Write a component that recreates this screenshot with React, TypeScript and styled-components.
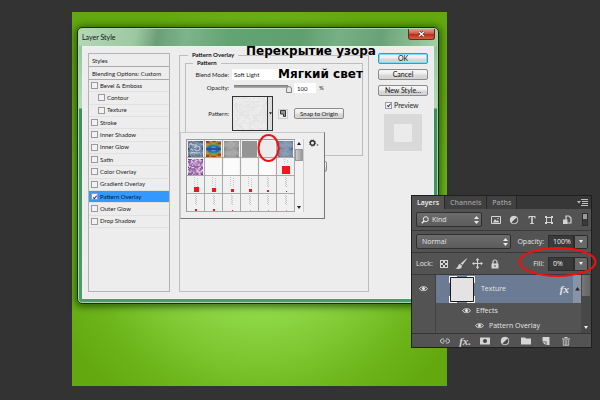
import React from "react";
import styled, { createGlobalStyle, css } from "styled-components";

const GlobalStyle = createGlobalStyle`
  *, *::before, *::after { box-sizing: border-box; }
  body { margin: 0; background: #333; }
  button, input, select { font: inherit; color: inherit; margin: 0; padding: 0; }
  svg { display: block; flex: none; }
`;

/* ---------- desktop ---------- */

const Desktop = styled.main`
  position: relative;
  min-height: 100vh;
  padding: 12px 0 14px 12%;
  display: flex;
  background: #333;
  overflow: hidden;
  font-family: "Lato", "Liberation Sans", sans-serif;
`;

const Artboard = styled.div`
  width: 71%;
  background: radial-gradient(circle at 50% 56%, #9be455 0, #8fd948 90px, #7fc832 135px, #6db51b 180px, #63a80f 225px);
`;

const Annotation = styled.p<{ $x: number; $y: number }>`
  position: absolute;
  left: ${(p) => p.$x}px;
  top: ${(p) => p.$y}px;
  margin: 0;
  color: #000;
  font: bold 12px/16px "DejaVu Sans", "Noto Sans", sans-serif;
  white-space: nowrap;
`;

const Ring = styled.svg<{ $x: number; $y: number }>`
  position: absolute;
  left: ${(p) => p.$x}px;
  top: ${(p) => p.$y}px;
  pointer-events: none;
`;

/* ---------- dialog ---------- */

const Dialog = styled.section`
  position: absolute;
  left: 77px;
  top: 27px;
  width: 362px;
  padding: 0 4px 4px;
  border: 1px solid #16301c;
  border-radius: 5px;
  background: linear-gradient(#8fbf96 0, #b7d8b8 80px, #3f8d58 81px, #4c9d68 100%);
  box-shadow: inset 0 0 0 1px #a9d3b0, 0 1px 7px 2px rgba(10, 40, 0, 0.6);
  color: #222;
  font-size: 6px;
  line-height: 8px;
`;

const TitleBar = styled.header`
  display: flex;
  justify-content: space-between;
  height: 17px;
  margin: 0 -3px;
  padding: 0 2px 0 3px;
  margin-top: 1px;
  border-radius: 3px 3px 0 0;
  background: linear-gradient(100deg, #b5d6b8 0, #9cc8a1 16%, #6c9f78 22%, #7db48a 30%, #62a373 42%, #5f9f70 62%, #77b084 72%, #69a278 84%, #a5d0a8 100%);
`;

const DialogTitle = styled.h1`
  margin: 0;
  font-size: 7px;
  line-height: 16px;
  font-weight: 400;
  color: #111;
`;

const CloseButton = styled.button`
  display: grid;
  place-items: center;
  width: 27px;
  height: 11px;
  border: 1px solid #6a2a20;
  border-top: 0;
  border-radius: 0 0 3px 3px;
  background: linear-gradient(#e0a090 0, #cf5a45 45%, #b52a14 50%, #d9603c 100%);
`;

const DialogBody = styled.div`
  display: grid;
  grid-template-columns: 82px 1fr 50px;
  gap: 9px;
  padding: 4px 5px 6px;
  border: 1px solid #e9f5ea;
  background: #ededed;
`;

const StyleList = styled.div`
  display: flex;
  flex-direction: column;
  margin-top: 2px;
  border: 1px solid #b4b4b4;
`;

const ListHead = styled.div`
  height: 13px;
  padding-left: 3px;
  line-height: 13px;
  border-bottom: 1px solid #a9a9a9;
`;

const EffectRows = styled.div`
  display: grid;
  grid-template-rows: repeat(12, 1fr);
  height: 148px;
`;

const EffectRow = styled.label<{ $nested?: boolean; $active?: boolean }>`
  display: flex;
  align-items: center;
  gap: 2px;
  padding-left: ${(p) => (p.$nested ? 9 : 2)}px;
  border-bottom: 1px solid #e1e1e1;
  white-space: nowrap;
  ${(p) => p.$active && css`background: #3399ff; color: #04172e;`}
`;

const Check = styled.input.attrs({ type: "checkbox" })`
  appearance: none;
  display: grid;
  place-items: center;
  width: 7px;
  height: 7px;
  flex: none;
  border: 1px solid #9a9a9a;
  background: #f2f2f2;
  &:checked::after {
    content: "";
    width: 2px;
    height: 4px;
    border: solid #26348a;
    border-width: 0 1px 1px 0;
    transform: rotate(40deg);
  }
`;

const OuterGroup = styled.fieldset`
  position: relative;
  min-width: 0;
  height: 241px;
  margin: 0;
  padding: 0 5px;
  border: 1px solid #bdbdbd;
`;

const InnerGroup = styled.fieldset`
  min-width: 0;
  height: 97px;
  margin: 0;
  padding: 1px 0 0;
  border: 1px solid #bdbdbd;
`;

const Legend = styled.legend<{ $indent: number }>`
  margin-left: ${(p) => p.$indent}px;
  padding: 0 4px;
  font-weight: 700;
  color: #111;
`;

const FormRow = styled.div<{ $h: number }>`
  display: grid;
  grid-template-columns: 43px 1fr;
  column-gap: 3px;
  align-items: center;
  height: ${(p) => p.$h}px;
`;

const FieldLabel = styled.label`
  text-align: right;
  white-space: nowrap;
`;

const Controls = styled.div`
  display: flex;
  align-items: center;
`;

const BlendSelect = styled.select`
  appearance: none;
  width: 67px;
  height: 11px;
  padding-left: 2px;
  border: 0;
  background: #fff;
`;

const Slider = styled.input.attrs({ type: "range" })`
  appearance: none;
  width: 60px;
  height: 10px;
  background: linear-gradient(#777, #b5b5b5) 2px 2px / 54px 3px no-repeat;
  &::-webkit-slider-thumb {
    appearance: none;
    width: 6px;
    height: 7px;
    margin-top: 3px;
    border: 1px solid #808080;
    background: #e8e8e8;
    border-radius: 3px 3px 0 0;
  }
`;

const NumberBox = styled.input`
  width: 22px;
  height: 10px;
  margin: 0 3px 0 2px;
  padding-left: 3px;
  border: 0;
  background: #fff;
`;

const SwatchButton = styled.button`
  display: flex;
  width: 41px;
  height: 35px;
  border: 1px solid #333;
  background: #dcdcdc;
  & > span {
    display: grid;
    place-items: center;
    width: 5px;
    height: 33px;
    border-left: 1px solid #333;
  }
`;

const PresetButton = styled.button`
  display: grid;
  place-items: center;
  width: 10px;
  height: 10px;
  margin: 0 6px 0 5px;
  border: 1px solid #ccc;
  background: #eee;
`;

const pushButton = css`
  border: 1px solid #8c8c8c;
  border-radius: 2px;
  background: linear-gradient(#f6f6f6 0, #ececec 48%, #dadada 52%, #d2d2d2 100%);
  white-space: nowrap;
`;

const SnapButton = styled.button`
  ${pushButton}
  width: 50px;
  height: 11px;
  line-height: 9px;
`;

const ResetRow = styled.div`
  display: flex;
  padding: 5px 0 0 12px;
`;

const ResetButton = styled.button`
  ${pushButton}
  width: 130px;
  height: 11px;
  line-height: 9px;
`;

const Picker = styled.div`
  position: absolute;
  left: 0;
  top: 73px;
  display: flex;
  align-items: flex-start;
  width: 145px;
  height: 87px;
  padding: 6px 5px;
  border: 1px solid #c9c9c9;
  border-right-color: #777;
  border-bottom-color: #777;
  background: #eee;
`;

const PatternGrid = styled.div`
  display: grid;
  grid-template-columns: repeat(6, 18px);
  grid-auto-rows: 18px;
  border: 1px solid #9a9a9a;
  border-width: 1px 0 0 1px;
`;

const PatternCell = styled.button`
  display: grid;
  place-items: center;
  border: 1px solid #aaa;
  border-width: 0 1px 1px 0;
  background: #f1f1f1;
`;

const PickerScroll = styled.div`
  display: flex;
  flex-direction: column;
  align-items: center;
  width: 9px;
  height: 73px;
  padding: 3px 0;
  border-right: 1px solid #ccc;
  background: #f2f2f2;
  & > i {
    width: 8px;
    height: 12px;
    margin: 4px 0 auto;
    border: 1px solid #999;
    background: linear-gradient(90deg, #ccc, #999);
  }
`;

const GearButton = styled.button`
  margin: 0 0 0 5px;
  border: 0;
  background: none;
`;

const Actions = styled.div`
  display: flex;
  flex-direction: column;
  gap: 5px;
  padding-top: 2px;
  font-size: 7px;
`;

const ActionButton = styled.button<{ $primary?: boolean }>`
  ${pushButton}
  height: 11px;
  line-height: 9px;
  color: #111;
  ${(p) => p.$primary && css`
    border-color: #2a9fc9;
    box-shadow: inset 0 0 0 1px #7fdcf7;
  `}
`;

const PreviewLabel = styled.label`
  display: flex;
  align-items: center;
  gap: 2px;
  height: 8px;
  padding-left: 7px;
`;

const PreviewBox = styled.div`
  display: grid;
  place-items: center;
  width: 38px;
  height: 37px;
  margin-left: 6px;
  background: #d9d9d9;
  &::after {
    content: "";
    width: 18px;
    height: 18px;
    background: #ebebeb;
  }
`;

/* ---------- layers panel ---------- */

const Panel = styled.aside`
  position: absolute;
  right: 8px;
  top: 195px;
  width: 181px;
  border: 1px solid #1f1f1f;
  background: #535353;
  color: #e6e6e6;
  font: 7px/10px "Open Sans", "Noto Sans", sans-serif;
`;

const Tabs = styled.div`
  display: flex;
  align-items: stretch;
  height: 13px;
  background: #373737;
`;

const Tab = styled.button<{ $on?: boolean }>`
  padding: 0 5px;
  border: 0;
  border-right: 1px solid #282828;
  background: ${(p) => (p.$on ? "#535353" : "#404040")};
  color: ${(p) => (p.$on ? "#f2f2f2" : "#9d9d9d")};
  font-weight: 600;
`;

const MenuButton = styled.button`
  margin: 0 3px 0 auto;
  border: 0;
  background: none;
`;

const Bar = styled.div`
  display: flex;
  align-items: center;
  height: 22px;
  padding: 0 3px 0 4px;
  border-bottom: 1px solid #393939;
`;

const SelectBox = styled.div<{ $w: number; $icon?: boolean }>`
  position: relative;
  display: flex;
  align-items: center;
  width: ${(p) => p.$w}px;
  height: 15px;
  border: 1px solid #2f2f2f;
  border-radius: 2px;
  background: linear-gradient(#6c6c6c, #5c5c5c);
  & > select {
    appearance: none;
    flex: 1;
    height: 13px;
    padding-left: ${(p) => (p.$icon ? 1 : 5)}px;
    border: 0;
    background: none;
  }
  & > svg { margin: 0 2px 0 4px; }
`;

const IconButton = styled.button`
  display: grid;
  place-items: center;
  width: 12px;
  height: 12px;
  border: 0;
  background: none;
  color: #d4d4d4;
`;

const FilterIcons = styled.div`
  display: flex;
  flex: 1;
  justify-content: space-between;
  margin: 0 9px 0 8px;
`;

const Toggle = styled.button`
  width: 6px;
  height: 13px;
  border: 1px solid #2c2c2c;
  background: linear-gradient(#9a9a9a 0 45%, #3a3a3a 45%);
`;

const LockIcons = styled.div`
  display: flex;
  gap: 5px;
  margin-left: 5px;
`;

const Percent = styled.div`
  display: flex;
  align-items: center;
  margin-left: auto;
  & > input {
    width: 26px;
    height: 14px;
    margin-left: 4px;
    padding-left: 4px;
    border: 1px solid #2c2c2c;
    background: #3a3a3a;
    color: #f0f0f0;
  }
  & > button {
    display: grid;
    place-items: center;
    width: 14px;
    height: 14px;
    border: 1px solid #2c2c2c;
    border-radius: 0 2px 2px 0;
    background: #686868;
  }
`;

const LayerArea = styled.div`
  display: grid;
  grid-template-columns: 24px 1fr 10px;
  height: 58px;
`;

const EyeColumn = styled.div`
  padding-top: 7px;
  border-right: 1px solid #424242;
  display: flex;
  justify-content: center;
  align-items: flex-start;
`;

const LayerRow = styled.div`
  display: grid;
  grid-template-columns: 26px 1fr auto 8px;
  align-items: center;
  height: 28px;
  padding-left: 13px;
  background: #6b7b93;
  & > b {
    display: grid;
    place-items: center;
    align-self: stretch;
    background: #8893a5;
  }
`;

const LayerName = styled.span`
  padding-left: 6px;
`;

const Fx = styled.span`
  padding-right: 4px;
  font: italic bold 11px/12px "Liberation Serif", serif;
`;

const FooterFx = styled.span`
  font: italic bold 11px/12px "Liberation Serif", serif;
`;

const SubRow = styled.div<{ $indent: number }>`
  display: flex;
  align-items: center;
  gap: 5px;
  height: 15px;
  padding-left: ${(p) => p.$indent}px;
`;

const LayerScroll = styled.div`
  display: flex;
  flex-direction: column;
  justify-content: space-between;
  align-items: center;
  padding-bottom: 4px;
  background: #484848;
  & > i {
    width: 8px;
    height: 21px;
    background: linear-gradient(90deg, #777, #666);
  }
`;

const Footer = styled.div`
  display: flex;
  justify-content: space-between;
  align-items: center;
  height: 14px;
  padding: 0 19px 0 27px;
  border-top: 1px solid #353535;
`;

/* ---------- drawings ---------- */

const Arrow = ({ up, color = "#222", size = 4 }: { up?: boolean; color?: string; size?: number }) => (
  <svg width={size} height={size / 2 + 1} viewBox="0 0 4 3" fill={color} aria-hidden="true">
    <path d={up ? "M0 3 2 0l2 3z" : "M0 0h4L2 3z"} />
  </svg>
);

const UpDown = () => (
  <svg width="5" height="8" viewBox="0 0 5 8" fill="#e8e8e8" aria-hidden="true">
    <path d="M0 3 2.500 0 5 3zM0 5h5L2.500 8z" />
  </svg>
);

const Eye = () => (
  <svg width="9" height="7" viewBox="0 0 9 7" aria-hidden="true">
    <path d="M.5 3.700C2 1 7 1 8.500 3.700 7 6.300 2 6.300.5 3.700z" fill="#555" stroke="#dcdcdc" />
    <circle cx="4.500" cy="3.400" r="1.500" fill="#e8e8e8" />
  </svg>
);

const Svg = ({ children, s = 10 }: { children: React.ReactNode; s?: number }) => (
  <svg width={s} height={s} viewBox="0 0 10 10" fill="currentColor" aria-hidden="true">
    {children}
  </svg>
);

const icons: Record<string, React.ReactNode> = {
  image: (
    <Svg>
      <path d="M.5 1.500h9v7h-9z" fill="none" stroke="currentColor" />
      <path d="M2 7.500 4 4l1.500 2L7 5l1.200 2.500z" />
      <circle cx="7" cy="3.500" r=".7" />
    </Svg>
  ),
  adjust: (
    <Svg>
      <circle cx="5" cy="5" r="4" />
      <path d="M7.800 2.200a4 4 0 0 1-5.600 5.600z" fill="#4a4a4a" />
      <circle cx="5" cy="5" r="3.800" fill="none" stroke="currentColor" strokeWidth=".7" />
    </Svg>
  ),
  type: (
    <Svg>
      <path d="M1.500 1h7v2.500h-.8L7.200 2H5.800v6l1.200.3V9H3v-.7L4.200 8V2H2.800l-.5 1.500h-.8z" />
    </Svg>
  ),
  shape: (
    <Svg>
      <path d="M2.500 2.500h5v5h-5z" fill="none" stroke="currentColor" />
      <path d="M1 1h2v2H1zM7 1h2v2H7zM1 7h2v2H1zM7 7h2v2H7z" />
    </Svg>
  ),
  smart: (
    <Svg>
      <path d="M4 1h3l2 2v5H4z" fill="none" stroke="currentColor" strokeWidth="1.200" />
      <path d="M1 4.500h4.500V9H1z" />
    </Svg>
  ),
  checker: (
    <Svg>
      <path d="M1 1h8v8H1z" />
      <path d="M2 2h2v2H2zM6 2h2v2H6zM4 4h2v2H4zM2 6h2v2H2zM6 6h2v2H6z" fill="#4a4a4a" />
    </Svg>
  ),
  brush: (
    <Svg s={12}>
      <path d="M9.800.2 4.700 4.500l1.500 1.400L9.900.8zM4.200 4.900C2.800 5 2.600 6.500 2.100 7.500c-.5.800-1.200.9-2 .9 2.300 1.400 5.900.9 5.700-2z" />
    </Svg>
  ),
  move: (
    <Svg s={11}>
      <path d="M5 0 3.300 2h1.200v2.500H2V3.300L0 5l2 1.700V5.500h2.500V8H3.300L5 10l1.700-2H5.500V5.500H8v1.200L10 5 8 3.300v1.200H5.500V2h1.200z" />
    </Svg>
  ),
  lock: (
    <Svg>
      <path d="M3 5V3a2 2 0 0 1 4 0v2" fill="none" stroke="currentColor" strokeWidth="1.200" />
      <path d="M1.500 4.500h7V9.500h-7z" />
      <path d="M4.500 6h1v2h-1z" fill="#444" />
    </Svg>
  ),
  link: (
    <Svg>
      <path d="M4 3H2.500a2 2 0 0 0 0 4H4M6 3h1.500a2 2 0 0 1 0 4H6M3 5h4" fill="none" stroke="currentColor" strokeWidth=".9" />
    </Svg>
  ),
  mask: (
    <Svg>
      <path d="M0 1.500h10v7H0z" />
      <circle cx="5" cy="5" r="2" fill="#444" />
    </Svg>
  ),
  folder: (
    <Svg>
      <path d="M0 1.500h4l1 1h5v6H0z" />
    </Svg>
  ),
  page: (
    <Svg>
      <path d="M1.500 1h7v8H5.500V5.500h-4z" />
      <path d="M1.500 6.300 4.600 9V6.300z" />
    </Svg>
  ),
  trash: (
    <Svg>
      <path d="M3.500 1.500h3M1 3h8" fill="none" stroke="currentColor" />
      <path d="M2.300 4v5.300h5.400V4M4.200 4v5M5.800 4v5" fill="none" stroke="currentColor" strokeWidth=".8" />
    </Svg>
  ),
};

const mosaic = (seed: number, colors: string[], n = 14) => {
  let s = seed;
  const cells: React.ReactNode[] = [];
  for (let y = 0; y < n; y++)
    for (let x = 0; x < n; x++) {
      s = (s * 1103515245 + 12345) % 2147483648;
      const c = colors[Math.floor((s / 2147483648) * colors.length)];
      cells.push(<rect key={`${x}-${y}`} x={x} y={y} width="1" height="1" fill={c} />);
    }
  return cells;
};

const redSizes = [8, 5, 4, 3, 3, 2, 1, 2, 2, 1, 1, 1, 1];

const Swatch = ({ index }: { index: number }) => {
  const base = { width: 15, height: 16, viewBox: "0 0 14 14", preserveAspectRatio: "none", "aria-hidden": true } as const;
  if (index === 0)
    return (
      <svg {...base}>
        {mosaic(7, ["#40597a", "#536c8c", "#6c86a5", "#33465f"])}
        <path d="M1 3c3-2 4 2 7 0M6 6c2-3 6-1 5 1s-4 2-5 0M2 11c3-3 5 1 9-1M2 7l3 1" fill="none" stroke="#b9c9da" strokeWidth="1" />
      </svg>
    );
  if (index === 1)
    return (
      <svg {...base}>
        <path d="M0 0h14v14H0z" fill="#c58a2c" />
        <path d="M0 0h3v2H0zM6 0h3v1H6zM11 1h3v2h-3zM0 12h3v2H0zM5 13h4v1H5zM11 11h3v2h-3z" fill="#a13a27" />
        <path d="M3 1h2v2H3zM9 1h2v2H9zM3 11h2v2H3zM9 11h2v2H9z" fill="#6f8b36" />
        <ellipse cx="7" cy="7" rx="7" ry="4.200" fill="#3e9a78" />
        <ellipse cx="7" cy="7" rx="6.500" ry="3" fill="#2f62b8" />
        <path d="M0 6.500h14v1H0z" fill="#263f91" />
        <path d="M5 5h4v1H5zM5 8h4v1H5z" fill="#58b7c4" />
      </svg>
    );
  if (index === 2) return <svg {...base}>{mosaic(21, ["#888", "#929292", "#7d7d7d", "#8d8d8d"])}</svg>;
  if (index === 3) return <svg {...base}><path d="M0 0h14v14H0z" fill="#949494" /></svg>;
  if (index === 4) return <svg {...base}><path d="M0 0h14v14H0z" fill="#ececec" /></svg>;
  if (index === 5) return <svg {...base}>{mosaic(5, ["#5c7799", "#657f9f", "#5f7a9b", "#627c9d", "#486385"])}</svg>;
  if (index === 6) return <svg {...base}>{mosaic(99, ["#7c3f90", "#914fa5", "#d3a8dc", "#e4c6e8", "#6a2f7d"])}</svg>;
  if (index < 11) return <svg {...base}><path d="M0 0h14v14H0z" fill={index % 2 ? "#f7f7f7" : "#fbfbfb"} /></svg>;
  const size = redSizes[index - 11];
  const low = index < 18 ? 16 : 17;
  const dots = index === 11 ? 5 : 10;
  return (
    <svg width="16" height="17" viewBox="0 0 16 17" aria-hidden="true">
      {Array.from({ length: dots }, (_, i) => (
        <rect key={i} x={index < 16 ? 6 + (i % 2) * 3 : 7 + (i % 2)} y={1 + i} width="1" height="1" fill="#c4c4c4" />
      ))}
      <rect x={8 - Math.floor(size / 2)} y={low - size} width={size} height={size} fill={index > 20 ? "#f58a8a" : "#f6141c"} />
    </svg>
  );
};

const Grain = () => (
  <svg width="34" height="33" viewBox="0 0 17 17" preserveAspectRatio="none" aria-hidden="true">
    {mosaic(33, ["#eaeaea", "#ececec", "#e7e7e7", "#eee", "#e4e4e4"], 17)}
  </svg>
);

const effects = [
  { name: "Bevel & Emboss" },
  { name: "Contour", nested: true },
  { name: "Texture", nested: true },
  { name: "Stroke" },
  { name: "Inner Shadow" },
  { name: "Inner Glow" },
  { name: "Satin" },
  { name: "Color Overlay" },
  { name: "Gradient Overlay" },
  { name: "Pattern Overlay", active: true },
  { name: "Outer Glow" },
  { name: "Drop Shadow" },
];

const LayerStyleDialog = () => (
  <Dialog aria-label="Layer Style">
    <TitleBar>
      <DialogTitle>Layer Style</DialogTitle>
      <CloseButton aria-label="Close">
        <svg width="7" height="6" viewBox="0 0 7 6" aria-hidden="true">
          <path d="m1 .8 5 4.400M6 .8 1 5.200" stroke="#4b2420" strokeWidth="2.600" />
          <path d="m1 .8 5 4.400M6 .8 1 5.200" stroke="#fff" strokeWidth="1.400" />
        </svg>
      </CloseButton>
    </TitleBar>
    <DialogBody>
      <StyleList>
        <ListHead>Styles</ListHead>
        <ListHead>Blending Options: Custom</ListHead>
        <EffectRows>
          {effects.map((e) => (
            <EffectRow key={e.name} $nested={e.nested} $active={e.active}>
              <Check defaultChecked={e.active} />
              {e.name}
            </EffectRow>
          ))}
        </EffectRows>
      </StyleList>

      <OuterGroup>
        <Legend $indent={3}>Pattern Overlay</Legend>
        <InnerGroup>
          <Legend $indent={7}>Pattern</Legend>
          <FormRow $h={13}>
            <FieldLabel htmlFor="blend">Blend Mode:</FieldLabel>
            <BlendSelect id="blend"><option>Soft Light</option></BlendSelect>
          </FormRow>
          <FormRow $h={14}>
            <FieldLabel htmlFor="opacity">Opacity:</FieldLabel>
            <Controls>
              <Slider id="opacity" defaultValue={100} />
              <NumberBox aria-label="Opacity percent" defaultValue="100" />%
            </Controls>
          </FormRow>
          <FormRow $h={37}>
            <FieldLabel htmlFor="pattern">Pattern:</FieldLabel>
            <Controls>
              <SwatchButton id="pattern">
                <Grain />
                <span><Arrow size={3} /></span>
              </SwatchButton>
              <PresetButton aria-label="New preset">
                <svg width="6" height="7" viewBox="0 0 6 7" aria-hidden="true">
                  <path d="M.5.5h5v6H3.500v-2.500h-3z" fill="#999" stroke="#333" />
                </svg>
              </PresetButton>
              <SnapButton>Snap to Origin</SnapButton>
            </Controls>
          </FormRow>
        </InnerGroup>
        <ResetRow><ResetButton aria-label="Reset" /></ResetRow>
        <Picker>
          <PatternGrid>
            {Array.from({ length: 24 }, (_, i) => (
              <PatternCell key={i} aria-label={`Pattern ${i + 1}`}><Swatch index={i} /></PatternCell>
            ))}
          </PatternGrid>
          <PickerScroll><Arrow up /><i /><Arrow /></PickerScroll>
          <GearButton aria-label="Pattern options">
            <svg width="10" height="8" viewBox="0 0 10 8" aria-hidden="true">
              <circle cx="3.500" cy="4" r="2.200" fill="none" stroke="#333" strokeWidth="1.400" />
              <circle cx="3.500" cy="4" r="3.100" fill="none" stroke="#333" strokeWidth=".9" strokeDasharray="1.200 1.230" />
              <path d="M7.500 5.500h2L8.500 7z" fill="#333" />
            </svg>
          </GearButton>
        </Picker>
      </OuterGroup>

      <Actions>
        <ActionButton $primary>OK</ActionButton>
        <ActionButton>Cancel</ActionButton>
        <ActionButton>New Style...</ActionButton>
        <PreviewLabel><Check defaultChecked />Preview</PreviewLabel>
        <PreviewBox />
      </Actions>
    </DialogBody>
  </Dialog>
);

const LayersPanel = () => (
  <Panel aria-label="Layers">
    <Tabs>
      <Tab $on>Layers</Tab>
      <Tab>Channels</Tab>
      <Tab>Paths</Tab>
      <MenuButton aria-label="Panel menu">
        <svg width="11" height="7" viewBox="0 0 11 7" fill="#bdbdbd" aria-hidden="true">
          <path d="M0 2h4L2 4.500zM4 0h7v1H4zM5 2h6v1H5zM5 4h6v1H5zM4 6h7v1H4z" />
        </svg>
      </MenuButton>
    </Tabs>
    <Bar>
      <SelectBox $w={66} $icon>
        <svg width="8" height="8" viewBox="0 0 8 8" aria-hidden="true">
          <circle cx="4.800" cy="3.200" r="2.500" fill="none" stroke="#eee" />
          <path d="M3 5 .8 7.300" stroke="#eee" strokeWidth="1.300" />
        </svg>
        <select aria-label="Filter kind"><option>Kind</option></select>
        <UpDown />
      </SelectBox>
      <FilterIcons>
        {["image", "adjust", "type", "shape", "smart"].map((n) => (
          <IconButton key={n} aria-label={n}>{icons[n]}</IconButton>
        ))}
      </FilterIcons>
      <Toggle aria-label="Filter switch" />
    </Bar>
    <Bar>
      <SelectBox $w={95}>
        <select aria-label="Blend mode"><option>Normal</option></select>
        <UpDown />
      </SelectBox>
      <Percent>
        <label htmlFor="layer-opacity">Opacity:</label>
        <input id="layer-opacity" defaultValue="100%" />
        <button aria-label="Opacity slider"><Arrow color="#eee" /></button>
      </Percent>
    </Bar>
    <Bar>
      Lock:
      <LockIcons>
        {["checker", "brush", "move", "lock"].map((n) => (
          <IconButton key={n} aria-label={n}>{icons[n]}</IconButton>
        ))}
      </LockIcons>
      <Percent>
        <label htmlFor="layer-fill">Fill:</label>
        <input id="layer-fill" defaultValue="0%" />
        <button aria-label="Fill slider"><Arrow color="#eee" /></button>
      </Percent>
    </Bar>
    <LayerArea>
      <EyeColumn><IconButton aria-label="Visibility"><Eye /></IconButton></EyeColumn>
      <div>
        <LayerRow>
          <svg width="26" height="27" viewBox="0 0 26 27" aria-hidden="true">
            <path d="M1.500 1.500h23v24h-23z" fill="#e4e2e2" stroke="#1c1c1c" />
            <path d="M.5 7V.5H8M18 .5h7.500V7M25.500 20v6.500H18M8 26.500H.5V20" fill="none" stroke="#fff" />
          </svg>
          <LayerName>Texture</LayerName>
          <Fx>fx</Fx>
          <b><Arrow up size={5} /></b>
        </LayerRow>
        <SubRow $indent={26}><Eye />Effects</SubRow>
        <SubRow $indent={39}><Eye />Pattern Overlay</SubRow>
      </div>
      <LayerScroll><i /><Arrow color="#eee" /></LayerScroll>
    </LayerArea>
    <Footer>
      <IconButton aria-label="Link layers">{icons.link}</IconButton>
      <IconButton aria-label="Layer effects"><FooterFx>fx.</FooterFx></IconButton>
      {["mask", "adjust", "folder", "page", "trash"].map((n) => (
        <IconButton key={n} aria-label={n}>{icons[n]}</IconButton>
      ))}
    </Footer>
  </Panel>
);

export default function App() {
  return (
    <>
      <GlobalStyle />
      <Desktop>
        <Artboard />
        <LayerStyleDialog />
        <Annotation $x={246} $y={43}>Перекрытие узора</Annotation>
        <Annotation $x={278} $y={66}>Мягкий свет</Annotation>
        <Ring $x={257} $y={133} width="23" height="30" viewBox="0 0 23 30" fill="none" stroke="#f50f0f" strokeWidth="2" aria-hidden="true">
          <ellipse cx="11.500" cy="15" rx="10" ry="13" />
        </Ring>
        <LayersPanel />
        <Ring $x={518} $y={246} width="79" height="32" viewBox="0 0 79 32" fill="none" stroke="#f50f0f" strokeWidth="2" aria-hidden="true">
          <ellipse cx="39.500" cy="16" rx="38" ry="14" />
        </Ring>
      </Desktop>
    </>
  );
}
